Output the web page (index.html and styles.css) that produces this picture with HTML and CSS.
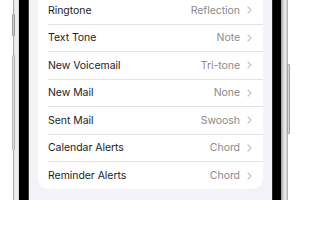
FILE: index.html
```html
<!DOCTYPE html>
<html>
<head>
<meta charset="utf-8">
<link rel="stylesheet" href="styles.css">
</head>
<body>
<div class="stage">
  <div class="outside outside-left"></div>
  <div class="frame frame-left"><div class="button btn-left-1"></div><div class="button btn-left-2"></div></div>
  <div class="bezel bezel-left"></div>
  <div class="screen">
    <div class="card">
      <div class="row"><span class="label">Ringtone</span><span class="value">Reflection</span><svg class="chev" width="5" height="8" viewBox="0 0 5 8"><polyline points="1,1 4,4 1,7"/></svg></div>
      <div class="row"><span class="label">Text Tone</span><span class="value">Note</span><svg class="chev" width="5" height="8" viewBox="0 0 5 8"><polyline points="1,1 4,4 1,7"/></svg></div>
      <div class="row"><span class="label">New Voicemail</span><span class="value">Tri-tone</span><svg class="chev" width="5" height="8" viewBox="0 0 5 8"><polyline points="1,1 4,4 1,7"/></svg></div>
      <div class="row"><span class="label">New Mail</span><span class="value">None</span><svg class="chev" width="5" height="8" viewBox="0 0 5 8"><polyline points="1,1 4,4 1,7"/></svg></div>
      <div class="row"><span class="label">Sent Mail</span><span class="value">Swoosh</span><svg class="chev" width="5" height="8" viewBox="0 0 5 8"><polyline points="1,1 4,4 1,7"/></svg></div>
      <div class="row"><span class="label">Calendar Alerts</span><span class="value">Chord</span><svg class="chev" width="5" height="8" viewBox="0 0 5 8"><polyline points="1,1 4,4 1,7"/></svg></div>
      <div class="row"><span class="label">Reminder Alerts</span><span class="value">Chord</span><svg class="chev" width="5" height="8" viewBox="0 0 5 8"><polyline points="1,1 4,4 1,7"/></svg></div>
    </div>
  </div>
  <div class="bezel bezel-right"></div>
  <div class="frame frame-right"><div class="button btn-right"></div></div>
  <div class="outside outside-right"></div>
</div>
</body>
</html>
```
FILE: styles.css
```css
html, body {
  margin: 0;
  padding: 0;
  width: 300px;
  height: 200px;
  overflow: hidden;
  background: #ffffff;
}
.stage {
  display: flex;
  width: 300px;
  height: 200px;
  font-family: Inter, "Noto Sans", sans-serif;
}
.outside-left { width: 13px; background: #fff; }
.outside-right { flex: 1; background: #fff; }
.frame { position: relative; }
.frame-left {
  width: 6px;
  box-sizing: border-box;
  border-left: 1px solid #a9a9ad;
  background: linear-gradient(to right, #e4e4e6, #f4f4f6 60%, #d0d0d4);
}
.frame-right {
  width: 7px;
  box-sizing: border-box;
  border-right: 1px solid #b4b4b8;
  background: linear-gradient(to right, #9a9a9e, #d6d6d9 40%, #ececee 70%, #c8c8cc);
}
.button {
  position: absolute;
  background: #c9c9cd;
  border: 1px solid #9d9da1;
  box-sizing: border-box;
  border-radius: 1px;
}
.btn-left-1 { left: -2px; top: 14px; width: 3px; height: 22px; }
.btn-left-2 { left: -2px; top: 55px; width: 3px; height: 95px; background: #dcdce0; border-color: #b8b8bc; }
.btn-right { right: -3px; top: 64px; width: 3px; height: 70px; background: #d8d8dc; border-color: #a4a4a8; }
.bezel { background: #000; }
.bezel-left { width: 10px; box-shadow: inset -1px 0 0 #3a3a3c; }
.bezel-right { width: 9px; box-shadow: inset 1px 0 0 #2a2a2c; }
.screen {
  width: 243px;
  background: #f2f2f7;
  box-sizing: border-box;
  padding: 0 9px;
}
.card {
  margin-top: -3px;
  background: #ffffff;
  border-radius: 0 0 10px 10px;
  padding-left: 10px;
}
.row {
  height: 27.5px;
  box-sizing: border-box;
  display: flex;
  align-items: center;
  padding-right: 11px;
  border-bottom: 1px solid #e3e3e7;
  font-size: 10.5px;
  letter-spacing: -0.05px;
}
.row:last-child { border-bottom: none; height: 27px; }
.label { flex: 1; color: #1c1c1f; }
.value { color: #8a8a8e; margin-right: 7px; }
.chev { fill: none; stroke: #c4c4c8; stroke-width: 1.2; stroke-linecap: round; stroke-linejoin: round; }
```
